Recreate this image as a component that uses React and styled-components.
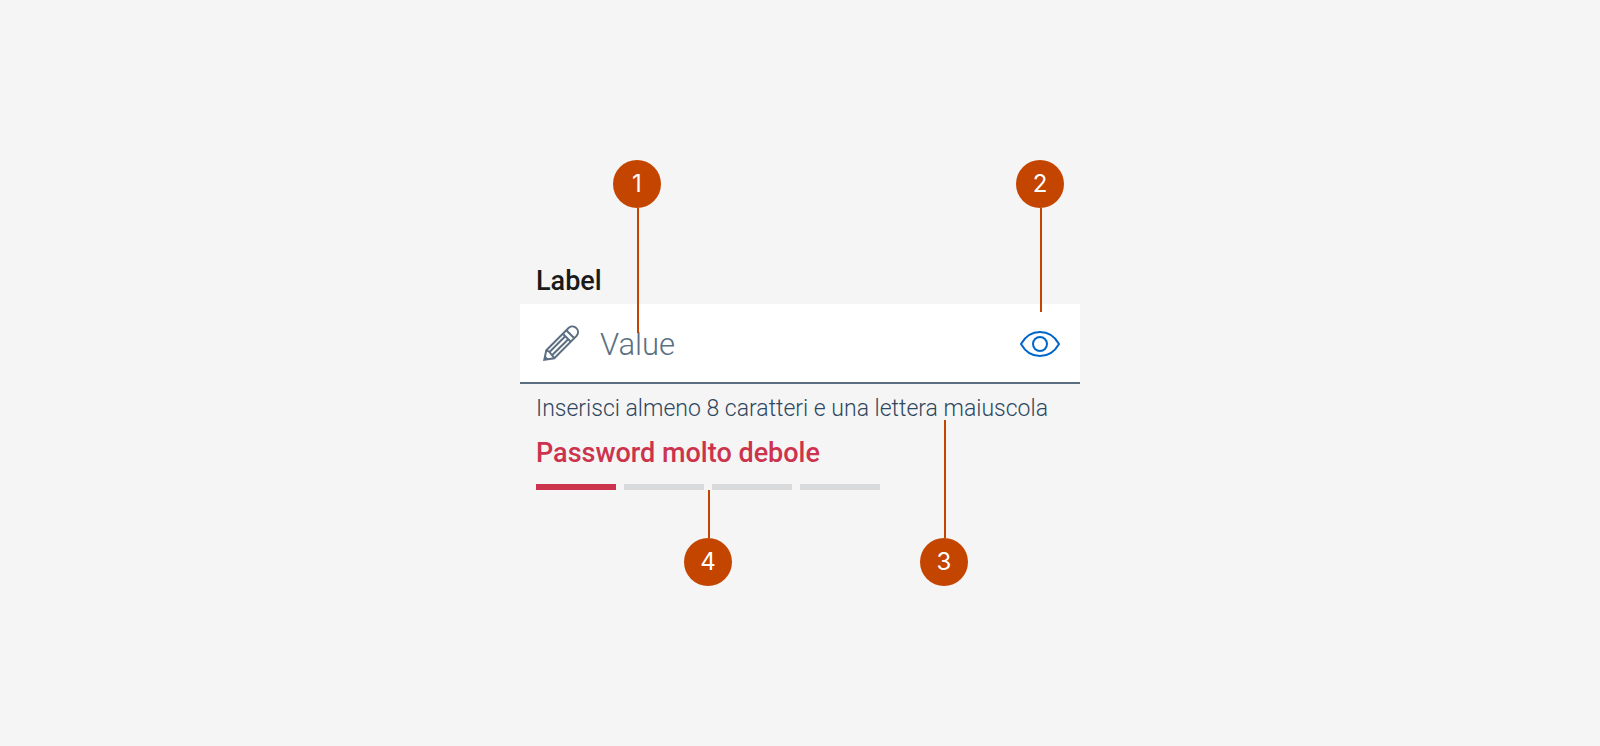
import React, { useState } from "react";
import styled, { createGlobalStyle } from "styled-components";

const GlobalStyle = createGlobalStyle`
  *, *::before, *::after { box-sizing: border-box; }
  body {
    margin: 0;
    background: #f5f5f5;
    font-family: Roboto, "Open Sans", sans-serif;
  }
`;

const Page = styled.main`
  min-height: 100vh;
  display: flex;
  align-items: center;
  justify-content: center;
`;

const Figure = styled.div`
  position: relative;
  width: 100%;
  max-width: 560px;
  padding: 104px 0 96px;
`;

const FormGroup = styled.div`
  display: flex;
  flex-direction: column;
`;

const Label = styled.label`
  padding: 0 16px;
  margin-bottom: 6px;
  font-size: 27px;
  line-height: 34px;
  font-weight: 500;
  color: #1a1a1a;
`;

const Field = styled.div`
  display: flex;
  align-items: center;
  height: 80px;
  padding: 2px 16px 0 20px;
  background: #fff;
  border-bottom: 2px solid #5b6f82;
`;

const Input = styled.input`
  flex: 1;
  min-width: 0;
  margin-left: 20px;
  padding: 2px 0 0;
  border: 0;
  outline: 0;
  background: none;
  font-family: inherit;
  font-size: 31px;
  font-weight: 300;
  line-height: 40px;
  color: #5b6f82;
`;

const IconButton = styled.button`
  display: flex;
  padding: 0;
  border: 0;
  background: none;
  cursor: pointer;
`;

const Hint = styled.p`
  margin: 8px 16px 0;
  font-size: 23px;
  font-weight: 300;
  line-height: 34px;
  color: #2f475e;
  white-space: nowrap;
`;

const StrengthText = styled.p`
  margin: 10px 16px 14px;
  font-size: 27px;
  line-height: 34px;
  font-weight: 500;
  color: #cc334d;
`;

const StrengthMeter = styled.div`
  display: flex;
  gap: 8px;
  padding: 0 16px;
`;

const Bar = styled.span`
  width: 80px;
  height: 6px;
  background: ${(p) => (p.$active ? "#cc334d" : "#d9dadb")};
`;

const Callout = styled.div`
  position: absolute;
  left: ${(p) => p.$left}px;
  ${(p) => (p.$below ? "bottom: 0;" : "top: 0;")}
  display: flex;
  flex-direction: ${(p) => (p.$below ? "column-reverse" : "column")};
  align-items: center;
  width: 48px;
  pointer-events: none;
`;

const Marker = styled.span`
  width: 48px;
  height: 48px;
  border-radius: 50%;
  background: #c44500;
  color: #fff;
  font-family: Inter, sans-serif;
  font-size: 24px;
  font-weight: 400;
  line-height: 48px;
  text-align: center;
`;

const Leader = styled.span`
  width: 2px;
  height: ${(p) => p.$length}px;
  margin-left: 2px;
  background: #c44500;
`;

const callouts = [
  { n: 1, left: 93, length: 125 },
  { n: 2, left: 496, length: 104 },
  { n: 3, left: 400, length: 118, below: true },
  { n: 4, left: 164, length: 48, below: true },
];

const PencilIcon = () => (
  <svg width="40" height="40" viewBox="0 0 40 40" fill="none" stroke="#5b6f82" strokeWidth="2" aria-hidden="true">
    <path d="M4.300 35.700L6.300 26.200L28.800 3.700A5.700 5.700 0 0 1 36.800 11.700L14.300 34.200Z" />
    <path d="M22.800 9.700L30.800 17.700M26.300 6.200L34.300 14.200M6.300 26.200L9.500 28L11.800 31L14.300 34.200M9 28.500L25.500 12M11.800 31.500L28.500 15" />
    <path d="M4.300 35.700L5 31.500L8.500 35Z" fill="#5b6f82" stroke="none" />
  </svg>
);

const EyeIcon = () => (
  <svg width="48" height="48" viewBox="0 0 48 48" fill="none" stroke="#0066cc" strokeWidth="2" aria-hidden="true">
    <path d="M5 24C14 8 34 8 43 24C34 40 14 40 5 24Z" strokeLinejoin="round" />
    <circle cx="24" cy="24" r="7" />
  </svg>
);

export default function App() {
  const [value, setValue] = useState("Value");
  const [visible, setVisible] = useState(true);
  return (
    <>
      <GlobalStyle />
      <Page>
        <Figure>
          <FormGroup>
            <Label htmlFor="password">Label</Label>
            <Field>
              <PencilIcon />
              <Input
                id="password"
                type={visible ? "text" : "password"}
                value={value}
                onChange={(e) => setValue(e.target.value)}
                aria-describedby="hint strength"
              />
              <IconButton type="button" aria-label="Mostra password" onClick={() => setVisible(!visible)}>
                <EyeIcon />
              </IconButton>
            </Field>
            <Hint id="hint">Inserisci almeno 8 caratteri e una lettera maiuscola</Hint>
            <StrengthText id="strength">Password molto debole</StrengthText>
            <StrengthMeter>
              {[0, 1, 2, 3].map((i) => (
                <Bar key={i} $active={i === 0} />
              ))}
            </StrengthMeter>
          </FormGroup>
          {callouts.map((c) => (
            <Callout key={c.n} $left={c.left} $below={c.below}>
              <Marker>{c.n}</Marker>
              <Leader $length={c.length} />
            </Callout>
          ))}
        </Figure>
      </Page>
    </>
  );
}
